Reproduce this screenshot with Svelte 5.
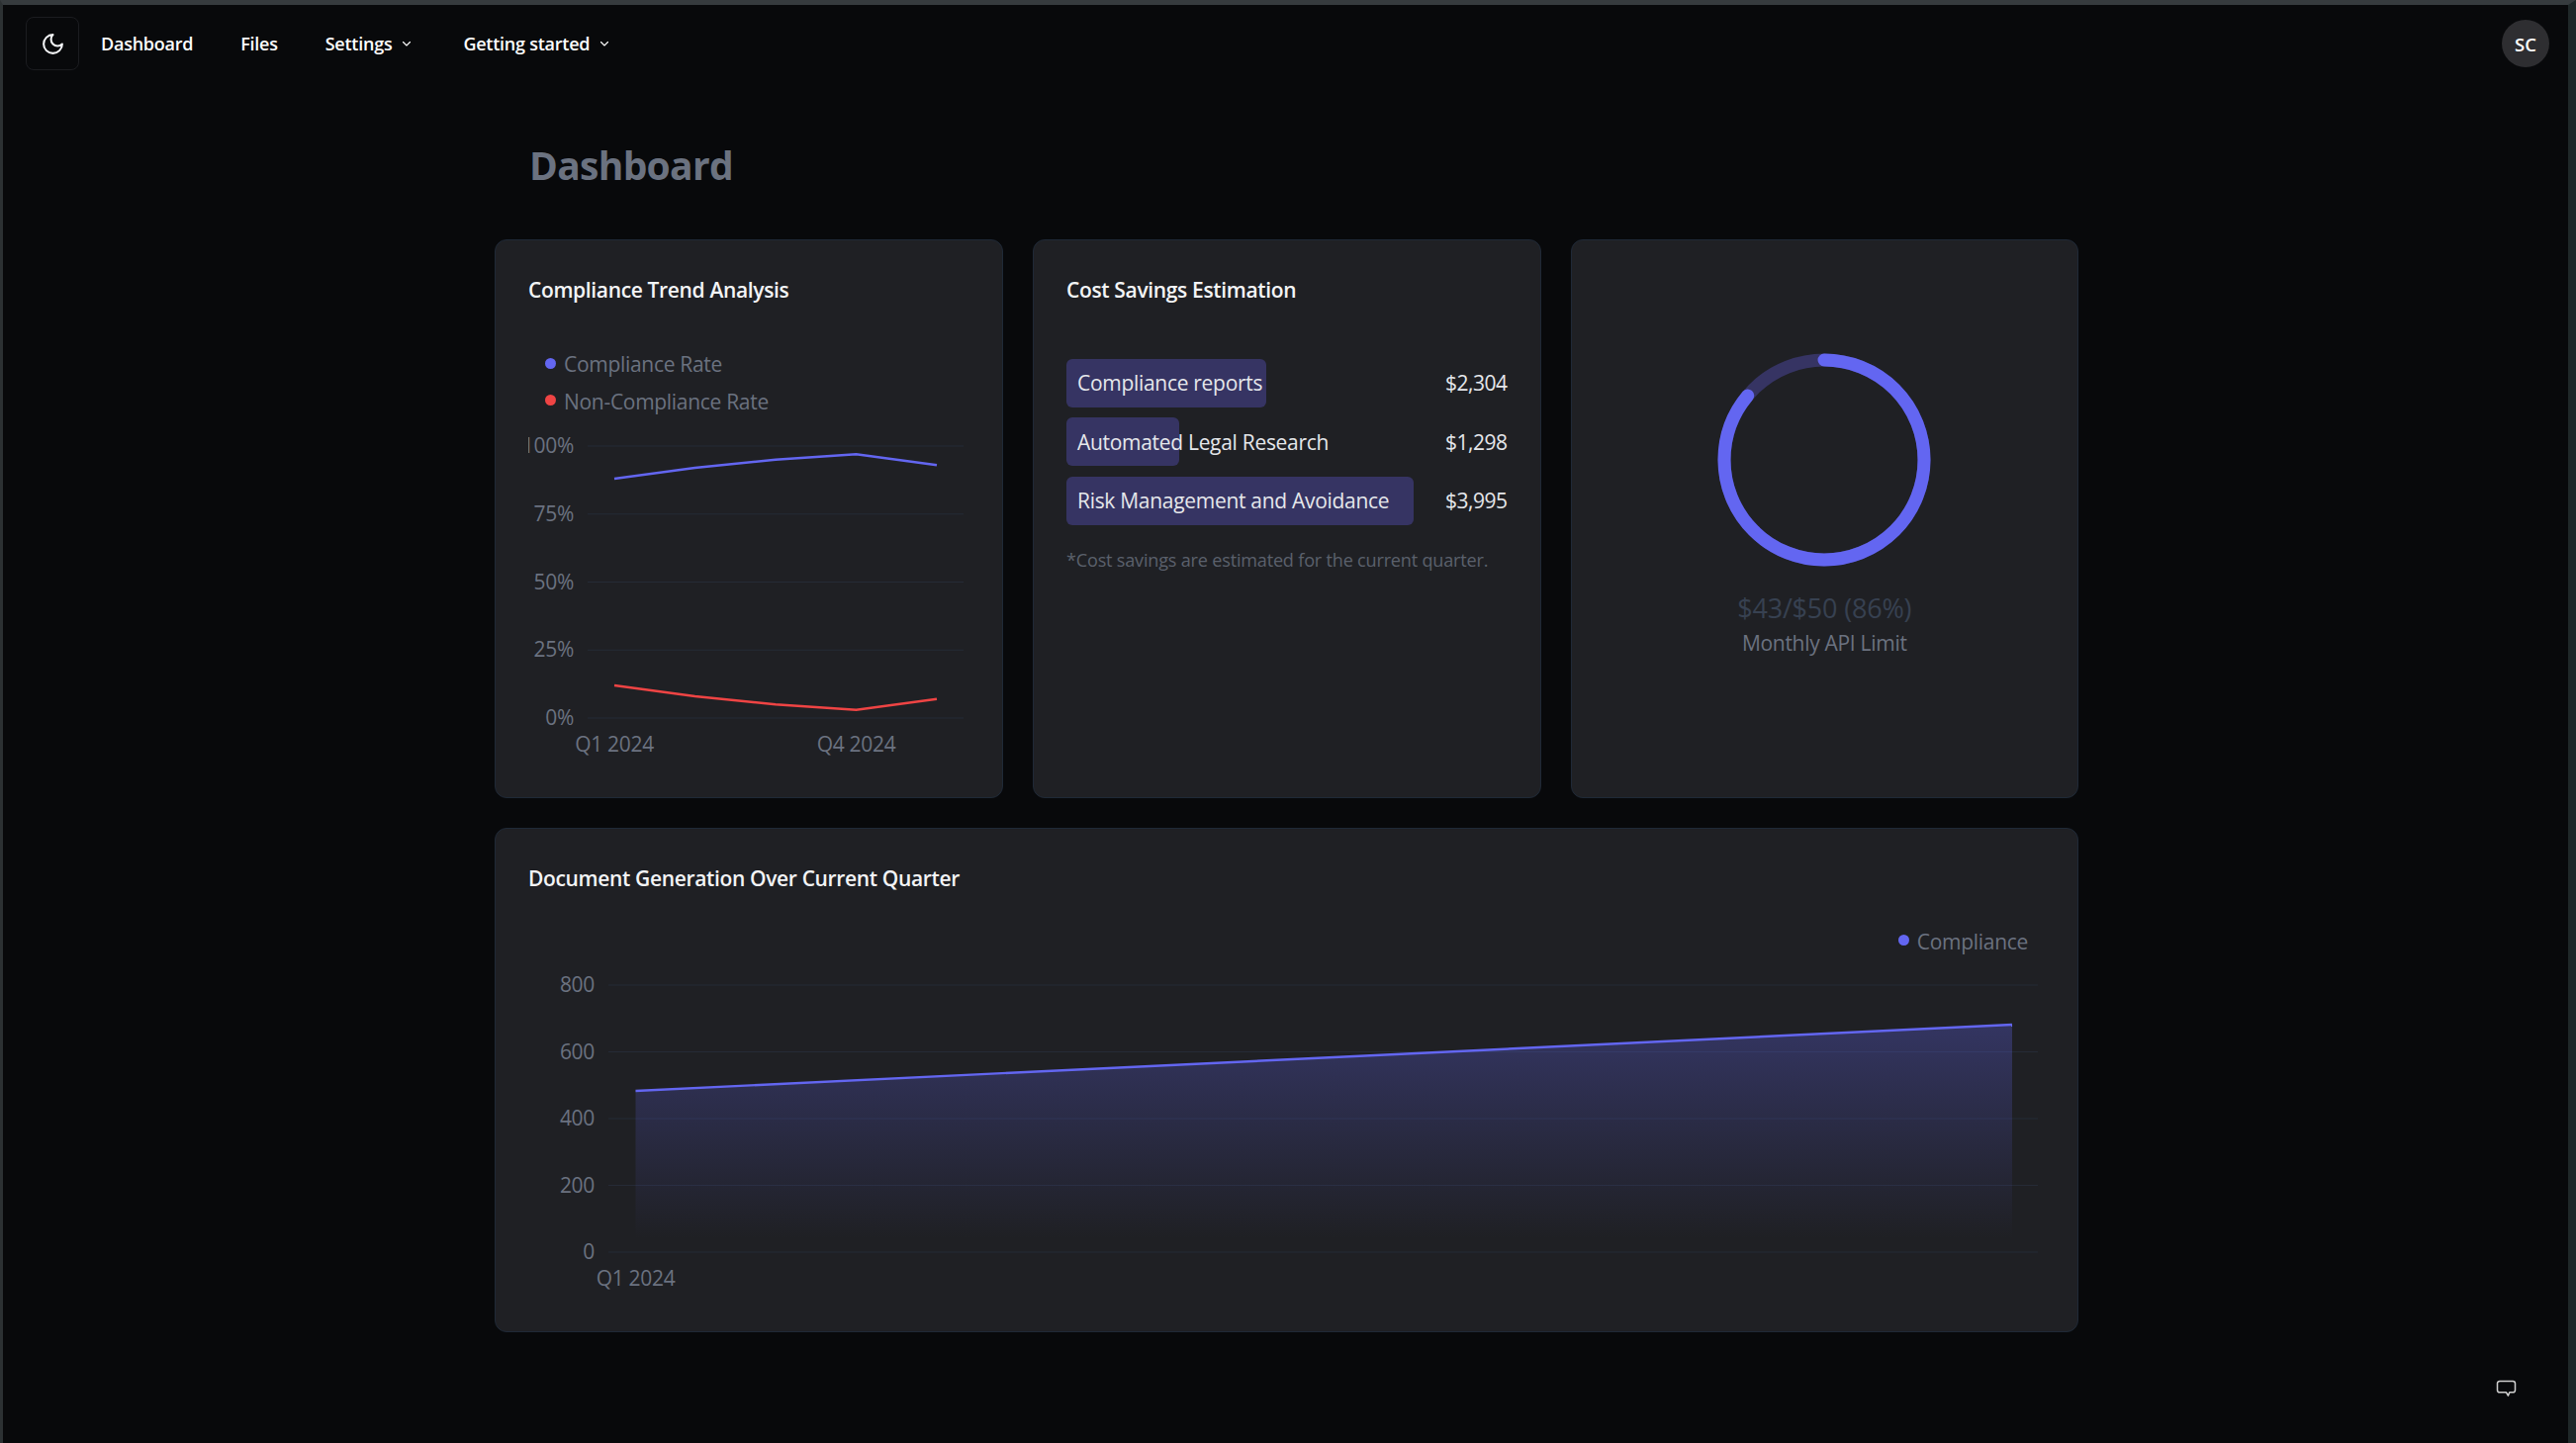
<script>
  const nav = [
    { label: 'Dashboard' },
    { label: 'Files' },
    { label: 'Settings', menu: true },
    { label: 'Getting started', menu: true },
  ];

  const savings = [
    { label: 'Compliance reports', amount: '$2,304', width: 202 },
    { label: 'Automated Legal Research', amount: '$1,298', width: 114 },
    { label: 'Risk Management and Avoidance', amount: '$3,995', width: 351 },
  ];

  // trend chart, coordinates local to the svg
  const trendBase = 301;
  const trendX = [87, 168.5, 250, 331.5, 413];
  const trendY = (v) => trendBase - v * 2.75;
  const toPoints = (vals) => vals.map((v, i) => `${trendX[i]},${trendY(v)}`).join(' ');
  const compliance = toPoints([88, 92, 95, 97, 93]);
  const nonCompliance = toPoints([12, 8, 5, 3, 7]);
  const trendTicks = ['0%', '25%', '50%', '75%', '100%'];

  const docTicks = ['0', '200', '400', '600', '800'];

  // donut
  const radius = 101;
  const circ = 2 * Math.PI * radius;
  const used = circ * 0.86;
</script>

<div class="shell">
  <header class="topbar">
    <button class="theme-btn" aria-label="Toggle theme">
      <svg width="25" height="25" viewBox="0 0 24 24" fill="none" stroke="currentColor" stroke-width="2" stroke-linecap="round" stroke-linejoin="round">
        <path d="M12 3a6 6 0 0 0 9 9 9 9 0 1 1-9-9Z" />
      </svg>
    </button>
    <nav class="nav">
      {#each nav as item}
        <span class="nav-item" class:has-menu={item.menu}>
          {item.label}
          {#if item.menu}
            <svg width="12" height="12" viewBox="0 0 24 24" fill="none" stroke="currentColor" stroke-width="2.2" stroke-linecap="round" stroke-linejoin="round">
              <path d="m5 9 7 7 7-7" />
            </svg>
          {/if}
        </span>
      {/each}
    </nav>
    <div class="avatar">SC</div>
  </header>

  <main class="content">
    <h1 class="page-title">Dashboard</h1>

    <div class="grid">
      <section class="card">
        <h2 class="card-title">Compliance Trend Analysis</h2>
        <ul class="legend">
          <li><i class="dot indigo"></i>Compliance Rate</li>
          <li><i class="dot red"></i>Non-Compliance Rate</li>
        </ul>
        <svg class="trend" width="446" height="345" viewBox="0 0 446 345">
          {#each trendTicks as tick, i}
            {@const y = trendBase - i * 68.75}
            <line class="gridline" x1="60" x2="440" y1={y} y2={y} />
            <text class="axis" x="46" y={y + 7} text-anchor="end">{tick}</text>
          {/each}
          <polyline class="line-indigo" points={compliance} />
          <polyline class="line-red" points={nonCompliance} />
          <text class="axis" x="87" y="335" text-anchor="middle">Q1 2024</text>
          <text class="axis" x="331.5" y="335" text-anchor="middle">Q4 2024</text>
        </svg>
      </section>

      <section class="card">
        <h2 class="card-title">Cost Savings Estimation</h2>
        <div class="bars">
          {#each savings as row}
            <div class="bar-row">
              <div class="bar-track">
                <div class="bar-fill" style="width: {row.width}px"></div>
                <span class="bar-label">{row.label}</span>
              </div>
              <span class="bar-amount">{row.amount}</span>
            </div>
          {/each}
        </div>
        <p class="footnote">*Cost savings are estimated for the current quarter.</p>
      </section>

      <section class="card card-donut">
        <svg width="216" height="216" viewBox="0 0 216 216">
          <circle class="donut-track" cx="108" cy="108" r={radius} />
          <circle
            class="donut-value"
            cx="108"
            cy="108"
            r={radius}
            stroke-dasharray="{used} {circ}"
            transform="rotate(-90 108 108)"
          />
        </svg>
        <div class="donut-amount">$43/$50 (86%)</div>
        <div class="donut-label">Monthly API Limit</div>
      </section>

      <section class="card card-wide">
        <h2 class="card-title">Document Generation Over Current Quarter</h2>
        <div class="legend-right"><i class="dot indigo"></i>Compliance</div>
        <svg class="docs" width="1532" height="345" viewBox="0 0 1532 345">
          <defs>
            <linearGradient id="docFill" x1="0" y1="0" x2="0" y2="1">
              <stop offset="0" stop-color="#6366f1" stop-opacity="0.3" />
              <stop offset="0.94" stop-color="#6366f1" stop-opacity="0" />
            </linearGradient>
          </defs>
          {#each docTicks as tick, i}
            {@const y = 299 - i * 67.5}
            <line class="gridline" x1="81" x2="1526" y1={y} y2={y} />
            <text class="axis" x="67" y={y + 7} text-anchor="end">{tick}</text>
          {/each}
          <polygon points="108.5,136 1500,69 1500,299 108.5,299" fill="url(#docFill)" />
          <line class="line-indigo" x1="108.5" y1="136" x2="1500" y2="69" />
          <text class="axis" x="108.5" y="333" text-anchor="middle">Q1 2024</text>
        </svg>
      </section>
    </div>
  </main>

  <button class="chat-btn" aria-label="Feedback">
    <svg width="21" height="18" viewBox="0 0 22 19" fill="none" stroke="currentColor" stroke-width="1.6" stroke-linejoin="round">
      <path d="M4 1.5h14a2.5 2.5 0 0 1 2.5 2.5v7a2.5 2.5 0 0 1-2.5 2.5h-3.5l-1.5 3.5-2-3.5H4A2.5 2.5 0 0 1 1.5 11V4A2.5 2.5 0 0 1 4 1.5Z" />
    </svg>
  </button>
</div>

<style>
  :global(body) {
    margin: 0;
    background: #08090b;
  }

  .shell {
    position: relative;
    box-sizing: border-box;
    height: 1459px;
    border-top: 5px solid #363b3e;
    border-left: 3px solid #2c3133;
    border-right: 8px solid #1f2829;
    background: #08090b;
    font-family: 'Open Sans', 'Noto Sans', sans-serif;
    color: #fff;
    overflow: hidden;
  }

  .topbar {
    display: flex;
    align-items: center;
    height: 78px;
    padding: 0 19px 0 23px;
  }

  .theme-btn {
    display: flex;
    align-items: center;
    justify-content: center;
    width: 54px;
    height: 54px;
    padding: 0;
    border: 1px solid #1b1c20;
    border-radius: 8px;
    background: transparent;
    color: #f3f4f6;
  }

  .nav {
    display: flex;
    align-items: center;
    margin-left: 22px;
    flex: 1;
  }

  .nav-item {
    display: flex;
    align-items: center;
    gap: 9px;
    margin-right: 48px;
    font-size: 18px;
    font-weight: 600;
    letter-spacing: -0.25px;
    white-space: nowrap;
  }

  .has-menu {
    margin-right: 51px;
  }

  .avatar {
    display: flex;
    align-items: center;
    justify-content: center;
    width: 48px;
    height: 48px;
    border-radius: 50%;
    background: #2e2e31;
    font-size: 18.5px;
    font-weight: 600;
  }

  .content {
    width: 1601px;
    margin-left: 497px;
  }

  .page-title {
    margin: 0;
    padding: 58px 0 0 35px;
    height: 159px;
    box-sizing: border-box;
    font-size: 39px;
    line-height: 52px;
    font-weight: 700;
    letter-spacing: -0.7px;
    color: #6b7280;
  }

  .grid {
    display: grid;
    grid-template-columns: repeat(3, 1fr);
    grid-template-rows: 565px 510px;
    gap: 30px;
  }

  .card {
    box-sizing: border-box;
    position: relative;
    padding: 36px 33px;
    border: 1px solid #1f2937;
    border-radius: 12px;
    background: #1f2024;
  }

  .card-title {
    margin: 0;
    font-size: 21px;
    line-height: 28px;
    font-weight: 600;
    letter-spacing: -0.35px;
    color: #f3f4f6;
  }

  .legend {
    list-style: none;
    margin: 43px 0 0;
    padding: 0 0 0 17px;
    font-size: 21px;
    line-height: 37.6px;
    letter-spacing: -0.3px;
    color: #6b7280;
  }

  .legend li {
    display: flex;
    align-items: center;
  }

  .dot {
    display: inline-block;
    flex: none;
    width: 11px;
    height: 11px;
    border-radius: 50%;
    margin: -3px 8px 0 0;
  }

  .indigo { background: #6366f1; }
  .red { background: #ef4444; }

  .trend,
  .docs {
    display: block;
  }

  .gridline {
    stroke: #252b36;
    stroke-width: 1;
  }

  .axis {
    fill: #6b7280;
    font-size: 21px;
    letter-spacing: -0.3px;
  }

  polyline,
  .line-indigo,
  .line-red {
    fill: none;
    stroke-width: 2.4;
  }

  .line-indigo { stroke: #6366f1; }
  .line-red { stroke: #ef4444; }

  .bars {
    display: flex;
    flex-direction: column;
    gap: 10.7px;
    margin-top: 56px;
  }

  .bar-row {
    display: flex;
    align-items: center;
    justify-content: space-between;
    height: 48.8px;
    font-size: 21px;
    letter-spacing: -0.3px;
    color: #e5e7eb;
  }

  .bar-track {
    position: relative;
    flex: 1;
    height: 100%;
    display: flex;
    align-items: center;
  }

  .bar-fill {
    position: absolute;
    top: 0;
    bottom: 0;
    left: 0;
    border-radius: 6px;
    background: #363463;
  }

  .bar-label {
    position: relative;
    padding-left: 11px;
    white-space: nowrap;
  }

  .bar-amount {
    letter-spacing: -0.5px;
  }

  .footnote {
    margin: 22px 0 0;
    font-size: 18.1px;
    line-height: 26px;
    letter-spacing: -0.2px;
    color: #5b606c;
  }

  .card-donut {
    display: flex;
    flex-direction: column;
    align-items: center;
    padding-top: 114px;
  }

  .donut-track,
  .donut-value {
    fill: none;
    stroke-width: 13;
  }

  .donut-track { stroke: #363463; }

  .donut-value {
    stroke: #6366f1;
    stroke-linecap: round;
  }

  .donut-amount {
    margin-top: 25px;
    font-size: 27px;
    line-height: 34px;
    font-weight: 500;
    letter-spacing: -0.2px;
    color: #374151;
  }

  .donut-label {
    margin-top: 3px;
    font-size: 21px;
    line-height: 30px;
    letter-spacing: -0.3px;
    color: #6b7280;
  }

  .card-wide {
    grid-column: 1 / -1;
  }

  .legend-right {
    display: flex;
    align-items: center;
    justify-content: flex-end;
    margin: 35px 17px 0 0;
    font-size: 21px;
    line-height: 30px;
    letter-spacing: -0.3px;
    color: #6b7280;
  }

  .chat-btn {
    position: absolute;
    right: 52px;
    bottom: 46px;
    padding: 0;
    border: none;
    background: transparent;
    color: #cfcfcf;
    display: flex;
  }
</style>
